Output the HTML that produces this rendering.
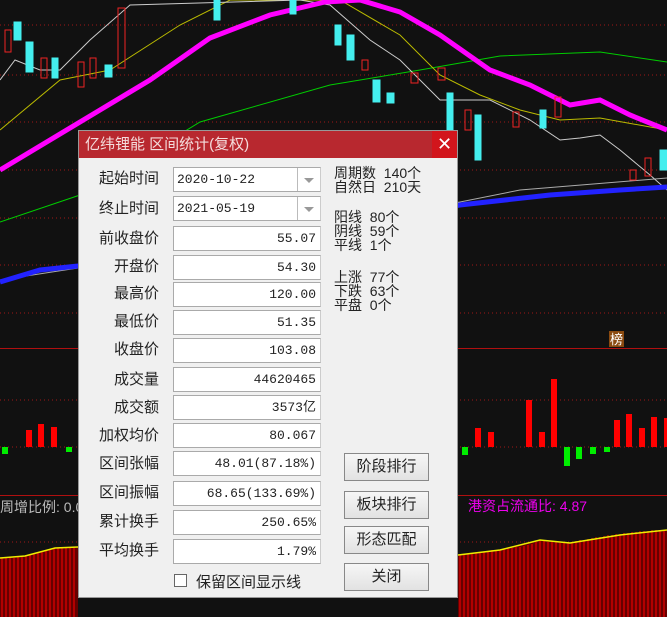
<!DOCTYPE html>
<html><head><meta charset="utf-8"><style>
*{margin:0;padding:0;box-sizing:border-box}
body{width:667px;height:617px;background:#111;position:relative;overflow:hidden;font-family:"Liberation Sans","Noto Sans CJK SC",sans-serif}
svg{position:absolute;left:0;top:0}
.dlg{position:absolute;left:78px;top:130px;width:380px;height:468px;background:#f0f0f0;border:1px solid #999}
.title{position:absolute;left:0;top:0;width:378px;height:27px;background:#b8282f;color:#f4dcdc;font-size:15px;line-height:27px;padding-left:6px}
.close{position:absolute;right:0;top:0;width:25px;height:27px;background:#d2151c;color:#fff;font-size:18px;text-align:center;line-height:26px}
.lb{position:absolute;width:80px;left:0;text-align:right;font-size:15px;color:#222;height:20px;line-height:20px}
.f{position:absolute;left:94px;width:148px;height:25px;background:#fff;border:1px solid #aaa;border-right-color:#ccc;font-family:"Liberation Mono","Noto Sans CJK SC",monospace;font-size:13px;color:#222;text-align:right;padding-right:4px;line-height:23px}
.f.d{text-align:left;padding-left:3px}
.f.d:after{content:"";position:absolute;right:0;top:0;width:22px;height:23px;border-left:1px solid #bbb}
.f.d i{position:absolute;right:6px;top:10px;border-left:5px solid transparent;border-right:5px solid transparent;border-top:5px solid #999;z-index:1}
.st{position:absolute;left:255px;font-size:14px;line-height:14px;color:#222}
.btn{position:absolute;left:265px;width:85px;height:28px;background:linear-gradient(#f6f6f6,#e2e2e2);border:1px solid #888;font-size:15px;text-align:center;line-height:26px;color:#222}
</style></head><body>
<svg width="667" height="617">
<g stroke="#a01818" stroke-dasharray="1 3" stroke-width="1">
<line x1="0" y1="25" x2="667" y2="25"/><line x1="0" y1="75" x2="667" y2="75"/><line x1="0" y1="122" x2="667" y2="122"/><line x1="0" y1="170" x2="667" y2="170"/><line x1="0" y1="218" x2="667" y2="218"/><line x1="0" y1="265" x2="667" y2="265"/><line x1="0" y1="313" x2="667" y2="313"/>
<line x1="0" y1="400" x2="667" y2="400"/><line x1="0" y1="447" x2="667" y2="447"/><line x1="0" y1="542" x2="667" y2="542"/>
</g>
<line x1="0" y1="348.5" x2="667" y2="348.5" stroke="#b01010"/>
<line x1="0" y1="495.5" x2="667" y2="495.5" stroke="#b01010"/>
<polyline fill="none" stroke="#aaa" points="0,280 78,268 460,202 520,190 667,178"/>
<polyline fill="none" stroke="#0c0" points="0,222 80,195 200,122 330,85 420,70 500,56 600,52 667,62"/>
<polyline fill="none" stroke="#bb0" points="0,130 60,80 110,70 180,25 230,0 340,0 400,35 440,75 480,95 520,110 560,120 600,118 667,130"/>
<polyline fill="none" stroke="#ccc" points="0,80 15,60 40,70 60,70 90,40 130,5 300,0 330,5 370,40 400,60 440,100 490,100 530,120 560,140 580,138 600,135 620,150 650,175 667,190"/>
<polyline fill="none" stroke="#f0f" stroke-width="5" points="0,170 50,140 100,110 150,80 210,38 270,15 325,2 360,0 400,12 440,35 490,70 530,85 570,105 600,100 630,115 667,130"/>
<polyline fill="none" stroke="#22f" stroke-width="5" points="0,282 40,270 78,266 460,205 550,195 620,190 667,187"/>
<g fill="#4ee" stroke="#4ee"><rect x="14" y="22" width="7" height="18"/><rect x="26" y="42" width="7" height="30"/><rect x="52" y="58" width="6" height="20"/><rect x="105" y="65" width="7" height="12"/><rect x="214" y="0" width="6" height="20"/><rect x="290" y="0" width="6" height="14"/><rect x="335" y="25" width="6" height="20"/><rect x="347" y="35" width="7" height="25"/><rect x="373" y="80" width="7" height="22"/><rect x="387" y="93" width="7" height="10"/><rect x="447" y="93" width="6" height="50"/><rect x="475" y="115" width="6" height="45"/><rect x="540" y="110" width="6" height="18"/><rect x="660" y="150" width="7" height="20"/></g>
<g fill="none" stroke="#e22"><rect x="5" y="30" width="6" height="22"/><rect x="41" y="58" width="6" height="20"/><rect x="78" y="62" width="6" height="25"/><rect x="90" y="58" width="6" height="20"/><rect x="118" y="8" width="7" height="60"/><rect x="362" y="60" width="6" height="10"/><rect x="411" y="73" width="7" height="10"/><rect x="438" y="68" width="7" height="12"/><rect x="465" y="110" width="6" height="20"/><rect x="513" y="112" width="6" height="15"/><rect x="555" y="97" width="6" height="20"/><rect x="630" y="170" width="6" height="10"/><rect x="645" y="158" width="6" height="18"/></g>
<g fill="#f00"><rect x="26" y="430" width="6" height="17"/><rect x="38" y="424" width="6" height="23"/><rect x="51" y="427" width="6" height="20"/><rect x="475" y="428" width="6" height="19"/><rect x="488" y="432" width="6" height="15"/><rect x="526" y="400" width="6" height="47"/><rect x="539" y="432" width="6" height="15"/><rect x="551" y="379" width="6" height="68"/><rect x="614" y="420" width="6" height="27"/><rect x="626" y="414" width="6" height="33"/><rect x="639" y="428" width="6" height="19"/><rect x="651" y="417" width="6" height="30"/><rect x="664" y="418" width="3" height="29"/></g>
<g fill="#0e0"><rect x="2" y="447" width="6" height="7"/><rect x="66" y="447" width="6" height="5"/><rect x="462" y="447" width="6" height="8"/><rect x="564" y="447" width="6" height="19"/><rect x="576" y="447" width="6" height="12"/><rect x="590" y="447" width="6" height="7"/><rect x="604" y="447" width="6" height="5"/></g>
<path d="M0,558 L25,556 L55,548 L78,547 L78,617 L0,617Z M458,617 L458,555 L500,550 L540,540 L570,543 L620,535 L667,530 L667,617Z" fill="#600"/>
<g stroke="#f00" stroke-width="1">
<path d="M2,558V617M6,558V617M10,558V617M14,558V617M18,557V617M22,557V617M26,556V617M30,555V617M34,553V617M38,552V617M42,551V617M46,550V617M50,549V617M54,548V617M58,548V617M62,548V617M66,548V617M70,547V617M74,547V617"/>
<path d="M460,555V617M464,555V617M468,554V617M472,554V617M476,553V617M480,553V617M484,552V617M488,551V617M492,550V617M496,550V617M500,550V617M504,549V617M508,548V617M512,548V617M516,547V617M520,547V617M524,546V617M528,545V617M532,544V617M536,542V617M540,541V617M544,541V617M548,542V617M552,542V617M556,542V617M560,543V617M564,543V617M568,543V617M572,542V617M576,541V617M580,540V617M584,540V617M588,539V617M592,538V617M596,537V617M600,537V617M604,536V617M608,535V617M612,535V617M616,534V617M620,534V617M624,533V617M628,533V617M632,532V617M636,532V617M640,531V617M644,531V617M648,531V617M652,530V617M656,530V617M660,530V617M664,530V617"/>
</g>
<polyline fill="none" stroke="#ee0" stroke-width="1.5" points="0,558 25,556 55,548 78,547"/>
<polyline fill="none" stroke="#ee0" stroke-width="1.5" points="458,555 500,550 540,540 570,543 620,535 667,530"/>
<text x="0" y="512" fill="#bbb" font-size="14" font-family="Liberation Sans,Noto Sans CJK SC,sans-serif">周增比例: 0.0</text>
<text x="468" y="511" fill="#e0e" font-size="14" font-family="Liberation Sans,Noto Sans CJK SC,sans-serif">港资占流通比: 4.87</text>
<rect x="609" y="331" width="15" height="16" fill="#8a4a10"/>
<text x="610" y="344" fill="#fff" font-size="13" font-family="Noto Sans CJK SC,sans-serif">榜</text>
</svg>
<div class="dlg">
<div class="title">亿纬锂能 区间统计(复权)</div>
<div class="close">✕</div>
<div class="lb" style="top:38px">起始时间</div><div class="f d" style="top:36px">2020-10-22<i></i></div>
<div class="lb" style="top:68px">终止时间</div><div class="f d" style="top:65px">2021-05-19<i></i></div>
<div class="lb" style="top:98px">前收盘价</div><div class="f" style="top:95px">55.07</div>
<div class="lb" style="top:126px">开盘价</div><div class="f" style="top:124px">54.30</div>
<div class="lb" style="top:153px">最高价</div><div class="f" style="top:151px">120.00</div>
<div class="lb" style="top:181px">最低价</div><div class="f" style="top:179px">51.35</div>
<div class="lb" style="top:209px">收盘价</div><div class="f" style="top:207px">103.08</div>
<div class="lb" style="top:239px">成交量</div><div class="f" style="top:236px">44620465</div>
<div class="lb" style="top:267px">成交额</div><div class="f" style="top:264px">3573亿</div>
<div class="lb" style="top:295px">加权均价</div><div class="f" style="top:292px">80.067</div>
<div class="lb" style="top:323px">区间张幅</div><div class="f" style="top:320px">48.01(87.18%)</div>
<div class="lb" style="top:352px">区间振幅</div><div class="f" style="top:350px">68.65(133.69%)</div>
<div class="lb" style="top:381px">累计换手</div><div class="f" style="top:379px">250.65%</div>
<div class="lb" style="top:410px">平均换手</div><div class="f" style="top:408px">1.79%</div>
<div style="position:absolute;left:95px;top:443px;width:13px;height:13px;background:#fff;border:1px solid #666"></div>
<div style="position:absolute;left:117px;top:440px;font-size:15px;color:#222">保留区间显示线</div>
<div class="st" style="top:35px">周期数&nbsp; 140个<br>自然日&nbsp; 210天</div>
<div class="st" style="top:79px">阳线&nbsp; 80个<br>阴线&nbsp; 59个<br>平线&nbsp; 1个</div>
<div class="st" style="top:139px">上涨&nbsp; 77个<br>下跌&nbsp; 63个<br>平盘&nbsp; 0个</div>
<div class="btn" style="top:322px">阶段排行</div>
<div class="btn" style="top:360px">板块排行</div>
<div class="btn" style="top:395px">形态匹配</div>
<div class="btn" style="top:432px">关闭</div>
</div>
</body></html>
